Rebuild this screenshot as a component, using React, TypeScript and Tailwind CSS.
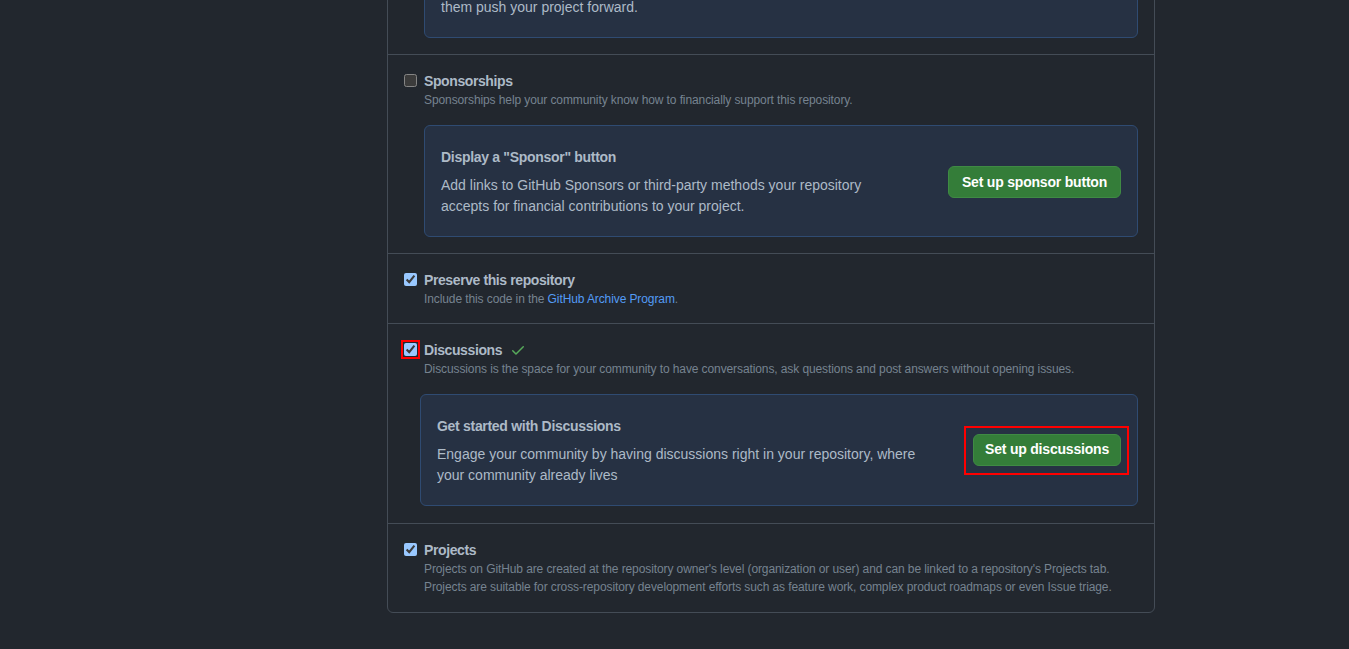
import React from "react";

const font = { fontFamily: '"Liberation Sans", Arial, sans-serif' };

function Check({ checked, outlined }: { checked: boolean; outlined?: boolean }) {
  return (
    <input
      type="checkbox"
      defaultChecked={checked}
      className={
        "scheme-dark m-0 mt-[3px] h-[13px] w-[13px] shrink-0 " +
        (outlined ? "outline-2 outline-[#ff0000] outline-offset-1" : "")
      }
    />
  );
}

function InfoBox({
  title,
  lines,
  button,
  wide,
  outlined,
  btnWidth,
}: {
  title: string;
  lines: string[];
  button: string;
  wide?: boolean;
  outlined?: boolean;
  btnWidth: string;
}) {
  const btn = (
    <button
      className={
        "h-8 shrink-0 rounded-md border border-[#3f8a44] bg-[#347d39] text-center text-[14px] font-semibold tracking-[-0.2px] text-white " +
        btnWidth
      }
    >
      {button}
    </button>
  );
  return (
    <div
      className={
        "mt-4 flex h-[112px] items-center justify-between rounded-md border border-[#2f4b72] bg-[#263143] px-4 " +
        (wide ? "ml-4" : "ml-5")
      }
    >
      <div className="flex flex-col">
        <div className="text-[14px] font-semibold leading-6 tracking-[-0.3px] text-[#adbac7]">{title}</div>
        <div className="mt-[6px] text-[14px] leading-[21px] text-[#adbac7]">
          {lines.map((l, i) => (
            <div key={i} className="whitespace-nowrap">
              {l}
            </div>
          ))}
        </div>
      </div>
      {outlined ? (
        <div className="-mr-2 flex border-2 border-[#ff0000] pb-[7px] pl-[7px] pr-[6px] pt-[6px]">{btn}</div>
      ) : (
        <div className="pt-[2px]">{btn}</div>
      )}
    </div>
  );
}

function Section({
  checked,
  title,
  desc,
  children,
  outlined,
  tick,
  last,
  pb,
}: {
  checked: boolean;
  title: string;
  desc: React.ReactNode;
  children?: React.ReactNode;
  outlined?: boolean;
  tick?: boolean;
  last?: boolean;
  pb?: string;
}) {
  return (
    <div className={"px-4 pt-4 " + (pb ?? "pb-4") + " " + (last ? "" : "border-b border-[#444c56]")}>
      <div className="flex gap-[7px]">
        <Check checked={checked} outlined={outlined} />
        <div className="flex flex-col">
          <div className="flex h-5 items-center text-[14px] font-semibold leading-5 tracking-[-0.4px] text-[#adbac7]">
            {title}
            {tick && (
              <svg viewBox="0 0 16 16" width="16" height="16" className="ml-[8px]" fill="#57ab5a">
                <path d="M13.78 4.22a.75.75 0 0 1 0 1.06l-7.25 7.25a.75.75 0 0 1-1.06 0L2.22 9.28a.751.751 0 0 1 .018-1.042.751.751 0 0 1 1.042-.018L6 10.94l6.72-6.72a.75.75 0 0 1 1.06 0Z" />
              </svg>
            )}
          </div>
          <div className="text-[12px] leading-[18px] tracking-[-0.1px] text-[#768390]">{desc}</div>
        </div>
      </div>
      {children}
    </div>
  );
}

export default function App() {
  return (
    <div className="h-[649px] w-full overflow-hidden bg-[#22272e]" style={font}>
      <div className="ml-[387px] mt-[-145px] w-[768px] rounded-md border border-[#444c56]">
        <Section
          checked
          title="Issues"
          desc="Issues integrate lightweight task tracking into your repository."
        >
          <InfoBox
            title="Get organized with issue templates"
            lines={[
              "Give contributors issue templates that help you cut through the noise and help",
              "them push your project forward.",
            ]}
            button="Set up templates"
            btnWidth="w-[140px]"
          />
        </Section>
        <Section
          checked={false}
          title="Sponsorships"
          desc="Sponsorships help your community know how to financially support this repository."
        >
          <InfoBox
            title={'Display a "Sponsor" button'}
            lines={[
              "Add links to GitHub Sponsors or third-party methods your repository",
              "accepts for financial contributions to your project.",
            ]}
            button="Set up sponsor button"
            btnWidth="w-[173px]"
          />
        </Section>
        <Section
          checked
          pb="pb-[15px]"
          title="Preserve this repository"
          desc={
            <>
              Include this code in the <span className="text-[#539bf5]">GitHub Archive Program</span>.
            </>
          }
        />
        <Section
          checked
          outlined
          tick
          pb="pb-[17px]"
          title="Discussions"
          desc="Discussions is the space for your community to have conversations, ask questions and post answers without opening issues."
        >
          <InfoBox
            wide
            outlined
            title="Get started with Discussions"
            lines={[
              "Engage your community by having discussions right in your repository, where",
              "your community already lives",
            ]}
            button="Set up discussions"
            btnWidth="w-[148px]"
          />
        </Section>
        <Section
          checked
          last
          title="Projects"
          desc={
            <>
              Projects on GitHub are created at the repository owner's level (organization or user) and can be linked to a
              repository's Projects tab.
              <br />
              Projects are suitable for cross-repository development efforts such as feature work, complex product roadmaps
              or even Issue triage.
            </>
          }
        />
      </div>
    </div>
  );
}
